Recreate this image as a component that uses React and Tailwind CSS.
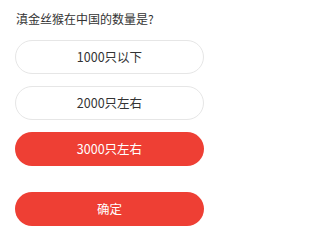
const OPTIONS = [
  { key: "a", label: "1000只以下" },
  { key: "b", label: "2000只左右" },
  { key: "c", label: "3000只左右", active: true },
];

export default function App() {
  return (
    <div
      className="w-[219px] h-[240px] bg-white overflow-hidden"
      style={{ fontFamily: '"Noto Sans CJK SC", "Noto Sans", sans-serif' }}
    >
      <div className="pt-[10px] pl-[16px] text-[12px] leading-[18px] text-[#333]">
        滇金丝猴在中国的数量是?
      </div>

      <div className="flex flex-col gap-[12px] mt-[12px] px-[15px]">
        {OPTIONS.map((o) => (
          <div
            key={o.key}
            className={`w-[189px] h-[34px] rounded-full flex items-center justify-center text-[12.5px] ${
              o.active
                ? "bg-[#ee3f34] text-white"
                : "bg-white border border-[#e6e6e6] text-[#333]"
            }`}
          >
            {o.label}
          </div>
        ))}
      </div>

      <div className="px-[15px] mt-[26px]">
        <div className="w-[189px] h-[34px] rounded-full bg-[#ee3f34] text-white flex items-center justify-center text-[12.5px]">
          确定
        </div>
      </div>
    </div>
  );
}
